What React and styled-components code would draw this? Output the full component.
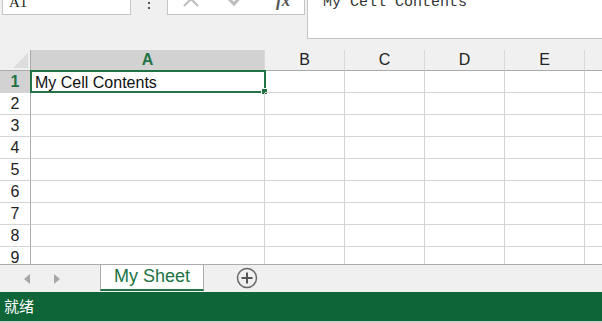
import React from "react";
import styled, { createGlobalStyle } from "styled-components";

const GlobalStyle = createGlobalStyle`
  html, body {
    margin: 0;
    padding: 0;
    background: #f0f0f0;
  }
  body {
    font-family: "Liberation Sans", Arial, sans-serif;
  }
`;

const GREEN = "#217346";

const Window = styled.div`
  width: 602px;
  height: 323px;
  overflow: hidden;
  display: flex;
  flex-direction: column;
  background: #f0f0f0;
`;

const TopBar = styled.div`
  height: 50px;
  flex: none;
  display: flex;
  align-items: flex-start;
  overflow: hidden;
`;

const NameBox = styled.div`
  box-sizing: border-box;
  margin: -11px 0 0 2px;
  width: 129px;
  height: 26px;
  background: #fff;
  border: 1px solid #c6c6c6;
  display: flex;
  align-items: flex-end;
  justify-content: space-between;
  padding: 0 8px 5px 6px;
  font-family: "Liberation Serif", "Times New Roman", serif;
  font-size: 15px;
  line-height: 14px;
  color: #222;
`;

const Caret = styled.span`
  font-family: "DejaVu Sans", sans-serif;
  font-size: 9px;
  color: #444;
  padding-bottom: 6px;
`;

const Dots = styled.div`
  width: 36px;
  display: flex;
  flex-direction: column;
  align-items: center;
  gap: 3px;
  margin-top: -3px;
  span {
    width: 2px;
    height: 2px;
    background: #555;
  }
`;

const FxBox = styled.div`
  box-sizing: border-box;
  margin-top: -11px;
  width: 138px;
  height: 26px;
  background: #fff;
  border: 1px solid #c6c6c6;
  display: flex;
  align-items: flex-end;
  padding: 0 0 6px 14px;
  gap: 26px;
`;

const FxLabel = styled.span`
  font-family: "Liberation Serif", serif;
  font-style: italic;
  font-weight: bold;
  font-size: 17px;
  line-height: 14px;
  color: #555;
  margin-left: 4px;
`;

const FormulaInput = styled.div`
  box-sizing: border-box;
  flex: 1;
  margin: -11px 0 0 2px;
  height: 50px;
  background: #fff;
  border-left: 1px solid #c6c6c6;
  border-bottom: 1px solid #c6c6c6;
  padding: 6px 0 0 15px;
  font-family: "Liberation Mono", "Courier New", monospace;
  font-size: 15px;
  line-height: 16px;
  color: #333;
`;

const Sheet = styled.div`
  position: relative;
  height: 214px;
  flex: none;
  overflow: hidden;
  background: #fff;
  display: grid;
  grid-template-columns: 31px 234px repeat(5, 80px);
  grid-auto-rows: 22px;
  grid-template-rows: 21px;
`;

const Corner = styled.div`
  position: relative;
  background: #f0f0f0;
  border-right: 1px solid #ababab;
  border-bottom: 1px solid #ababab;
  box-sizing: border-box;
  &::after {
    content: "";
    position: absolute;
    right: 2px;
    bottom: 2px;
    border-style: solid;
    border-width: 0 0 15px 15px;
    border-color: transparent transparent #dcdcdc transparent;
  }
`;

const ColHead = styled.div`
  box-sizing: border-box;
  background: ${(p) => (p.$active ? "#d2d2d2" : "#f0f0f0")};
  border-right: 1px solid #d9d9d9;
  border-bottom: 1px solid #ababab;
  display: flex;
  align-items: center;
  justify-content: center;
  font-size: 16px;
  font-weight: ${(p) => (p.$active ? "bold" : "normal")};
  color: ${(p) => (p.$active ? GREEN : "#222")};
`;

const RowHead = styled.div`
  box-sizing: border-box;
  background: ${(p) => (p.$active ? "#d2d2d2" : "#fff")};
  border-right: 1px solid #ababab;
  border-bottom: 1px solid #d4d4d4;
  display: flex;
  align-items: center;
  justify-content: center;
  padding-top: 1px;
  font-size: 16px;
  font-weight: ${(p) => (p.$active ? "bold" : "normal")};
  color: ${(p) => (p.$active ? GREEN : "#222")};
`;

const Cell = styled.div`
  position: relative;
  box-sizing: border-box;
  border-right: 1px solid #d4d4d4;
  border-bottom: 1px solid #d4d4d4;
  font-size: 16px;
  line-height: 23px;
  padding-left: 4px;
  color: #111;
  white-space: nowrap;
`;

const Selection = styled.div`
  position: absolute;
  left: -1px;
  top: -1px;
  right: -2px;
  bottom: -1px;
  border: 2px solid ${GREEN};
  pointer-events: none;
  &::after {
    content: "";
    position: absolute;
    right: -4px;
    bottom: -4px;
    width: 7px;
    height: 7px;
    background: ${GREEN};
    border: 1px solid #fff;
    box-sizing: border-box;
  }
`;

const TabBar = styled.div`
  box-sizing: border-box;
  height: 28px;
  flex: none;
  border-top: 1px solid #ababab;
  background: #f0f0f0;
  display: flex;
  align-items: flex-start;
`;

const Arrows = styled.div`
  width: 100px;
  height: 27px;
  display: flex;
  align-items: center;
  padding-left: 24px;
  gap: 22px;
  box-sizing: border-box;
`;

const Tab = styled.div`
  box-sizing: border-box;
  width: 104px;
  height: 26px;
  background: #fff;
  border-left: 1px solid #ababab;
  border-right: 1px solid #ababab;
  border-bottom: 2px solid ${GREEN};
  display: flex;
  align-items: center;
  justify-content: center;
  font-size: 18px;
  color: ${GREEN};
  padding-bottom: 2px;
`;

const AddSheet = styled.div`
  width: 86px;
  height: 27px;
  display: flex;
  align-items: center;
  justify-content: center;
  padding-bottom: 2px;
  box-sizing: border-box;
`;

const StatusBar = styled.div`
  height: 29px;
  flex: none;
  background: #0e6537;
  color: #fff;
  display: flex;
  align-items: center;
  padding: 0 0 2px 4px;
  box-sizing: border-box;
  font-family: "Noto Sans CJK SC", sans-serif;
  font-size: 15px;
`;

const Strip = styled.div`
  flex: 1;
  background: #cfcfcf;
`;

const cols = ["A", "B", "C", "D", "E", "F"];
const rows = [1, 2, 3, 4, 5, 6, 7, 8, 9, 10];

const Tri = ({ dir }) => (
  <svg width="7" height="10" viewBox="0 0 7 10">
    <path d={dir === "left" ? "M6 0 L0 5 L6 10 Z" : "M1 0 L7 5 L1 10 Z"} fill="#a6a6a6" />
  </svg>
);

export default function App() {
  return (
    <Window>
      <GlobalStyle />
      <TopBar>
        <NameBox>
          <span>A1</span>
          <Caret>▼</Caret>
        </NameBox>
        <Dots>
          <span />
          <span />
          <span />
        </Dots>
        <FxBox>
          <svg width="18" height="18" viewBox="0 0 18 18">
            <path d="M2 2 L16 16 M16 2 L2 16" stroke="#bdbdbd" strokeWidth="2" />
          </svg>
          <svg width="20" height="18" viewBox="0 0 20 18">
            <path d="M2 8 L8 14 L18 3" stroke="#bdbdbd" strokeWidth="3" fill="none" />
          </svg>
          <FxLabel>fx</FxLabel>
        </FxBox>
        <FormulaInput>My Cell Contents</FormulaInput>
      </TopBar>

      <Sheet>
        <Corner />
        {cols.map((c) => (
          <ColHead key={c} $active={c === "A"}>
            {c}
          </ColHead>
        ))}
        {rows.map((r) => (
          <React.Fragment key={r}>
            <RowHead $active={r === 1}>{r}</RowHead>
            {cols.map((c) => (
              <Cell key={c}>
                {r === 1 && c === "A" && (
                  <>
                    My Cell Contents
                    <Selection />
                  </>
                )}
              </Cell>
            ))}
          </React.Fragment>
        ))}
      </Sheet>

      <TabBar>
        <Arrows>
          <Tri dir="left" />
          <Tri dir="right" />
        </Arrows>
        <Tab>My Sheet</Tab>
        <AddSheet>
          <svg width="22" height="22" viewBox="0 0 22 22">
            <circle cx="11" cy="11" r="9.5" stroke="#666" strokeWidth="1.5" fill="none" />
            <path d="M11 5.5 V16.5 M5.5 11 H16.5" stroke="#555" strokeWidth="2" />
          </svg>
        </AddSheet>
      </TabBar>

      <StatusBar>就绪</StatusBar>
      <Strip />
    </Window>
  );
}
